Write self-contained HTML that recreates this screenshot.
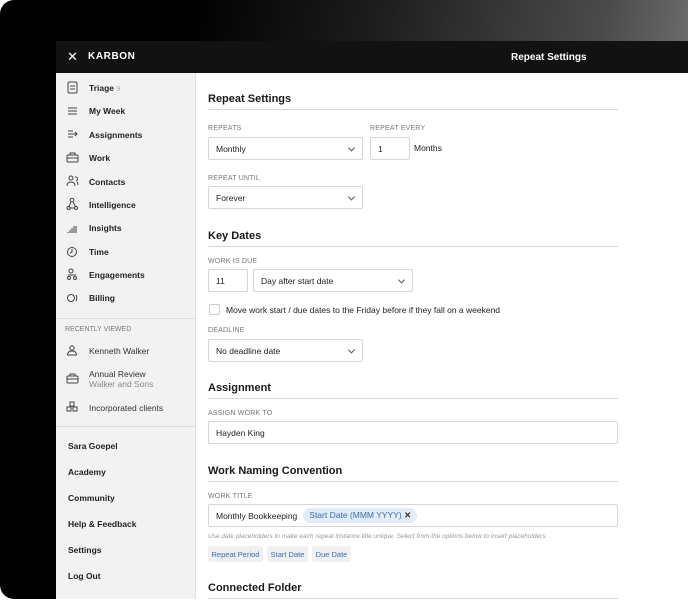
<!DOCTYPE html>
<html><head><meta charset="utf-8"><style>
*{margin:0;padding:0;box-sizing:border-box}
body{width:688px;height:601px;overflow:hidden;background:#fff;font-family:"Liberation Sans",sans-serif;position:relative}
.dev{position:absolute;left:0;top:0;width:688px;height:599px;background:#000;border-radius:14px 0 0 14px;overflow:hidden}
.glow{position:absolute;left:200px;top:0;width:488px;height:41px;background:linear-gradient(100deg,#020202 0%,#1c1c1c 35%,#3a3a3a 65%,#4a4a4a 82%,#6a6a6a 100%)}
.bar{position:absolute;left:56px;top:41px;width:632px;height:32px;background:#121212;color:#fff}
.side{position:absolute;left:56px;top:73px;width:140px;height:528px;background:#f2f2f2;border-right:1px solid #e2e2e2}
.main{position:absolute;left:196px;top:73px;width:492px;height:528px;background:#fff}
.a{position:absolute;white-space:nowrap}
.nav{font-size:8.5px;color:#222;font-weight:bold;left:89px}
.h{font-size:11px;font-weight:bold;color:#1a1a1a;left:208px}
.rule{position:absolute;left:208px;width:410px;height:1px;background:#d8d8d8}
.lab{font-size:7px;color:#777;left:208px;letter-spacing:.2px}
.box{position:absolute;border:1px solid #d6d6d6;border-radius:2px;background:#fff;font-size:8.5px;color:#222;padding-left:7px;display:flex;align-items:center}
.chev{position:absolute;right:8px;top:50%;width:5px;height:5px;border-right:1px solid #555;border-bottom:1px solid #555;transform:translateY(-70%) rotate(45deg)}
.bt{position:absolute;top:546px;height:16px;background:#f0f0f0;color:#3b6db3;font-size:7.5px;display:flex;align-items:center;justify-content:center;border-radius:2px}
.foot{font-size:8.5px;color:#222;font-weight:bold;left:68px}
</style></head><body>
<div class="dev">
<div class="glow"></div>
<div class="bar">
<div class="a" style="left:11px;top:8px;font-size:13px">✕</div>
<div class="a" style="left:32px;top:10px;font-size:10px;font-weight:bold;letter-spacing:.6px">KARBON</div>
<div class="a" style="left:455px;top:11px;font-size:10px;font-weight:bold">Repeat Settings</div>
</div>
<div class="side"></div>
<div class="main"></div>
</div>

<svg class="a" style="left:0;top:0" width="196" height="420" fill="none" stroke="#444" stroke-width="1">
<rect x="68" y="82" width="9" height="11" rx="1.5"/><path d="M70 86h5M70 89h5"/>
<path d="M68 108h9M68 111h9M68 114h9"/>
<path d="M68 131h5M68 134h8M68 137h5M75 132l2 2-2 2"/>
<rect x="67" y="155" width="11" height="7" rx="1"/><path d="M70 155v-2h5v2M67 158h11"/>
<circle cx="71" cy="178" r="2"/><path d="M67 186c0-3 2-4 4-4s4 1 4 4M75 177a2 2 0 011 4M77 182c1 1 1 2 1 3"/>
<circle cx="72" cy="200" r="1.8"/><circle cx="68.5" cy="208" r="1.5"/><circle cx="76" cy="208" r="1.5"/><path d="M71 202l-2 4.5M73 202l2.5 4.5M70 208h4.5"/>
<path d="M68 233v-1M70 233v-3M72 233v-5M74 233v-7M76 233v-7"/>
<circle cx="72" cy="252" r="4.5"/><path d="M72 249v3l-2 1"/>
<circle cx="71" cy="271" r="2"/><circle cx="69" cy="278" r="1.5"/><circle cx="75" cy="278" r="1.5"/><path d="M68 275h8"/>
<circle cx="71" cy="298" r="3.5"/><path d="M76 295c1 1 1 5 0 6"/>
<circle cx="72" cy="348" r="2.2"/><path d="M67.5 355c0-3 2-4 4.5-4s4.5 1 4.5 4z"/>
<rect x="67" y="376" width="11" height="7" rx="1"/><path d="M70 376v-2h5v2M67 379h11"/>
<rect x="70" y="402" width="4" height="4"/><rect x="67" y="407" width="4" height="4"/><rect x="73" y="407" width="4" height="4"/>
</svg>
<div class="a nav" style="top:83px">Triage <span style="color:#aaa;font-weight:normal;font-size:7px">9</span></div>
<div class="a nav" style="top:106px">My Week</div>
<div class="a nav" style="top:130px">Assignments</div>
<div class="a nav" style="top:153px">Work</div>
<div class="a nav" style="top:177px">Contacts</div>
<div class="a nav" style="top:200px">Intelligence</div>
<div class="a nav" style="top:223px">Insights</div>
<div class="a nav" style="top:247px">Time</div>
<div class="a nav" style="top:270px">Engagements</div>
<div class="a nav" style="top:293px">Billing</div>
<div class="a" style="left:56px;top:318px;width:140px;height:1px;background:#dcdcdc"></div>
<div class="a" style="left:65px;top:326px;font-size:7px;color:#777">RECENTLY VIEWED</div>
<div class="a" style="left:89px;top:346px;font-size:8.5px;color:#333">Kenneth Walker</div>
<div class="a" style="left:89px;top:369px;font-size:8.5px;color:#333">Annual Review</div>
<div class="a" style="left:89px;top:379px;font-size:8.5px;color:#888">Walker and Sons</div>
<div class="a" style="left:89px;top:403px;font-size:8.5px;color:#333">Incorporated clients</div>
<div class="a" style="left:56px;top:426px;width:140px;height:1px;background:#dcdcdc"></div>
<div class="a foot" style="top:441px">Sara Goepel</div>
<div class="a foot" style="top:467px">Academy</div>
<div class="a foot" style="top:493px">Community</div>
<div class="a foot" style="top:519px">Help &amp; Feedback</div>
<div class="a foot" style="top:545px">Settings</div>
<div class="a foot" style="top:571px">Log Out</div>

<div class="a h" style="top:93px">Repeat Settings</div>
<div class="rule" style="top:109px"></div>
<div class="a lab" style="top:125px">REPEATS</div>
<div class="a lab" style="top:125px;left:370px">REPEAT EVERY</div>
<div class="box" style="left:208px;top:137px;width:155px;height:23px">Monthly<span class="chev"></span></div>
<div class="box" style="left:370px;top:137px;width:40px;height:23px">1</div>
<div class="a" style="left:414px;top:143px;font-size:8.5px;color:#222">Months</div>
<div class="a lab" style="top:175px">REPEAT UNTIL</div>
<div class="box" style="left:208px;top:186px;width:155px;height:23px">Forever<span class="chev"></span></div>
<div class="a h" style="top:230px">Key Dates</div>
<div class="rule" style="top:246px"></div>
<div class="a lab" style="top:258px">WORK IS DUE</div>
<div class="box" style="left:208px;top:269px;width:40px;height:23px">11</div>
<div class="box" style="left:253px;top:269px;width:160px;height:23px">Day after start date<span class="chev"></span></div>
<div class="a" style="left:209px;top:304px;width:11px;height:11px;border:1px solid #ccc;border-radius:2px"></div>
<div class="a" style="left:226px;top:305px;font-size:8.5px;color:#222">Move work start / due dates to the Friday before if they fall on a weekend</div>
<div class="a lab" style="top:327px">DEADLINE</div>
<div class="box" style="left:208px;top:339px;width:155px;height:23px">No deadline date<span class="chev"></span></div>
<div class="a h" style="top:382px">Assignment</div>
<div class="rule" style="top:398px"></div>
<div class="a lab" style="top:410px">ASSIGN WORK TO</div>
<div class="box" style="left:208px;top:421px;width:410px;height:23px">Hayden King</div>
<div class="a h" style="top:465px">Work Naming Convention</div>
<div class="rule" style="top:481px"></div>
<div class="a lab" style="top:493px">WORK TITLE</div>
<div class="box" style="left:208px;top:504px;width:410px;height:23px">Monthly Bookkeeping
<span style="margin-left:6px;background:#e1ecf8;color:#3b6db3;border-radius:8px;padding:2px 6px;font-size:8.5px">Start Date (MMM YYYY) <b style="color:#333">✕</b></span></div>
<div class="a" style="left:208px;top:533px;font-size:6.5px;color:#999;font-style:italic">Use date placeholders to make each repeat instance title unique. Select from the options below to insert placeholders.</div>
<div class="bt" style="left:208px;width:55px">Repeat Period</div>
<div class="bt" style="left:267px;width:41px">Start Date</div>
<div class="bt" style="left:312px;width:39px">Due Date</div>
<div class="a h" style="top:582px">Connected Folder</div>
<div class="rule" style="top:598px"></div>
</body></html>
